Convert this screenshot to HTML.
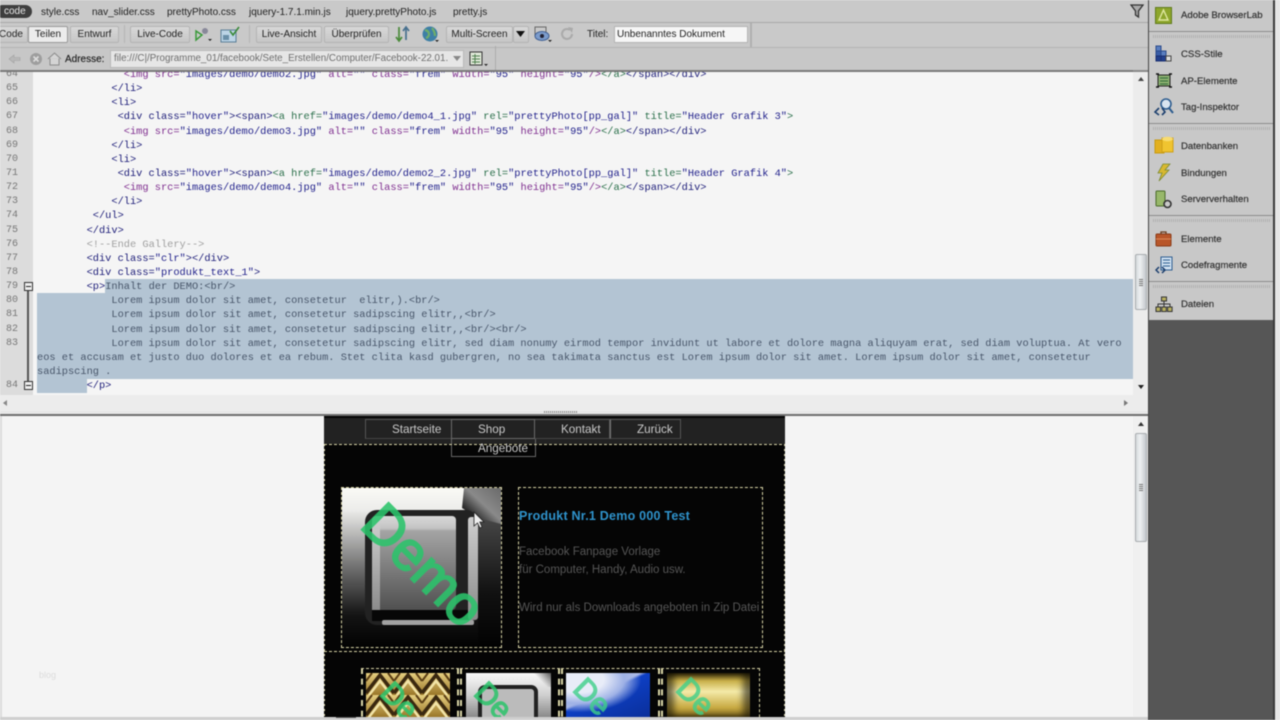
<!DOCTYPE html>
<html lang="de"><head><meta charset="utf-8"><title>Unbenanntes Dokument</title>
<style>
html,body{margin:0;padding:0;width:1280px;height:720px;overflow:hidden;background:#f4f4f4;font-family:"Liberation Sans",sans-serif}
#root{position:absolute;left:0;top:0;width:1280px;height:720px;overflow:hidden;filter:blur(.45px)}
.a{position:absolute;white-space:nowrap}
.bar{position:absolute;background:#c9c9c9}
.tab{position:absolute;top:6px;font-size:10px;line-height:13px;color:#222;white-space:nowrap}
.btn{position:absolute;top:26px;height:15px;line-height:15px;font-size:10px;color:#222;text-align:center;background:linear-gradient(#d8d8d8,#c6c6c6);border:1px solid #b4b4b4;border-radius:2px;white-space:nowrap}
.lbl{position:absolute;left:1181px;font-size:9.6px;line-height:12px;color:#333;-webkit-text-stroke:.2px #333;white-space:nowrap}
.pd{position:absolute;left:1149px;width:124px;height:1px;background:#8c8c8c}
.pg{position:absolute;left:1153px;width:118px;height:3px;background:repeating-linear-gradient(90deg,#b0b0b0 0 1px,#c9c9c9 1px 2px)}
#code{position:absolute;left:37px;margin:0;font:10.33px/14.14px "Liberation Mono",monospace;color:#1c1c78;white-space:pre}
#code i{font-style:normal;color:#803090}
#code b{font-weight:normal;color:#2a6f4a}
#code u{text-decoration:none;color:#23238c}
#code s{text-decoration:none;color:#a0a0a0}
#code em{font-style:normal;color:#48566a}
#nums{position:absolute;left:0;width:18px;text-align:right;font:10px/14.14px "Liberation Mono",monospace;color:#777;white-space:pre}
.sb{position:absolute;left:1135px;width:10px;background:linear-gradient(90deg,#d6dadd,#eef0f2 40%,#c4c8cc);border:1px solid #a9adb0;border-radius:2px}
.grip{position:absolute;left:3px;width:4px;height:7px;background:repeating-linear-gradient(#777 0 1px,transparent 1px 2px)}
.dash{position:absolute;border:1px dashed #d8d4a6;box-sizing:border-box}
.nv{position:absolute;top:419px;height:20px;border:1px solid #555;border-bottom-color:#444;box-sizing:border-box}
.nt{position:absolute;font-size:11.7px;line-height:14px;color:#c9c9c9;white-space:nowrap}
.ptxt{position:absolute;left:519px;font-size:11.5px;line-height:14px;color:#565656;white-space:nowrap}
.demo{position:absolute;font-family:"Liberation Sans",sans-serif;color:#2bc46b;white-space:nowrap;transform-origin:0 50%}
</style></head><body>
<div id="root">

<!-- code area -->
<div class="a" style="left:0;top:72px;width:1133px;height:323px;background:#f5f5f5"></div>
<div class="a" style="left:0;top:72px;width:33px;height:323px;background:#dcdcdc"></div>
<div class="a" style="left:105px;top:279px;width:1028px;height:14px;background:#b3c4d3"></div>
<div class="a" style="left:37px;top:293px;width:1096px;height:86px;background:#b3c4d3"></div>
<div class="a" style="left:37px;top:379px;width:50px;height:14px;background:#b3c4d3"></div>

<div class="a" style="left:0;top:72px;width:1133px;height:323px;overflow:hidden">
<div id="nums" style="top:-4px">64
65
66
67
68
69
70
71
72
73
74
75
76
77
78
79
80
81
82
83


84</div>
<pre id="code" style="top:-4px">              <i>&lt;img</i> <i>src=</i><u>"images/demo/demo2.jpg"</u> <i>alt=</i><u>""</u> <i>class=</i><u>"frem"</u> <i>width=</i><u>"95"</u> <i>height=</i><u>"95"</u><i>/&gt;</i><b>&lt;/a&gt;</b>&lt;/span&gt;&lt;/div&gt;
            &lt;/li&gt;
            &lt;li&gt;
             &lt;div class=<u>"hover"</u>&gt;&lt;span&gt;<b>&lt;a href=</b><u>"images/demo/demo4_1.jpg"</u> <b>rel=</b><u>"prettyPhoto[pp_gal]"</u> <b>title=</b><u>"Header Grafik 3"</u><b>&gt;</b>
              <i>&lt;img</i> <i>src=</i><u>"images/demo/demo3.jpg"</u> <i>alt=</i><u>""</u> <i>class=</i><u>"frem"</u> <i>width=</i><u>"95"</u> <i>height=</i><u>"95"</u><i>/&gt;</i><b>&lt;/a&gt;</b>&lt;/span&gt;&lt;/div&gt;
            &lt;/li&gt;
            &lt;li&gt;
             &lt;div class=<u>"hover"</u>&gt;&lt;span&gt;<b>&lt;a href=</b><u>"images/demo/demo2_2.jpg"</u> <b>rel=</b><u>"prettyPhoto[pp_gal]"</u> <b>title=</b><u>"Header Grafik 4"</u><b>&gt;</b>
              <i>&lt;img</i> <i>src=</i><u>"images/demo/demo4.jpg"</u> <i>alt=</i><u>""</u> <i>class=</i><u>"frem"</u> <i>width=</i><u>"95"</u> <i>height=</i><u>"95"</u><i>/&gt;</i><b>&lt;/a&gt;</b>&lt;/span&gt;&lt;/div&gt;
            &lt;/li&gt;
         &lt;/ul&gt;
        &lt;/div&gt;
        <s>&lt;!--Ende Gallery--&gt;</s>
        &lt;div class=<u>"clr"</u>&gt;&lt;/div&gt;
        &lt;div class=<u>"produkt_text_1"</u>&gt;
        &lt;p&gt;<em>Inhalt der DEMO:&lt;br/&gt;</em>
            <em>Lorem ipsum dolor sit amet, consetetur  elitr,).&lt;br/&gt;</em>
            <em>Lorem ipsum dolor sit amet, consetetur sadipscing elitr,,&lt;br/&gt;</em>
            <em>Lorem ipsum dolor sit amet, consetetur sadipscing elitr,,&lt;br/&gt;&lt;br/&gt;</em>
            <em>Lorem ipsum dolor sit amet, consetetur sadipscing elitr, sed diam nonumy eirmod tempor invidunt ut labore et dolore magna aliquyam erat, sed diam voluptua. At vero</em>
<em>eos et accusam et justo duo dolores et ea rebum. Stet clita kasd gubergren, no sea takimata sanctus est Lorem ipsum dolor sit amet. Lorem ipsum dolor sit amet, consetetur</em>
<em>sadipscing .</em>
        &lt;/p&gt;</pre>
</div>

<!-- fold markers -->
<div class="a" style="left:27px;top:286px;width:2px;height:99px;background:#555"></div>
<div class="a" style="left:24px;top:282px;width:7px;height:7px;border:1px solid #333;background:#eee"></div>
<div class="a" style="left:26px;top:286px;width:5px;height:1px;background:#222"></div>
<div class="a" style="left:24px;top:381px;width:7px;height:7px;border:1px solid #333;background:#eee"></div>
<div class="a" style="left:26px;top:385px;width:5px;height:1px;background:#222"></div>

<!-- code scrollbars -->
<div class="a" style="left:1133px;top:72px;width:15px;height:323px;background:#ececec"></div>
<svg class="a" style="left:1137px;top:76px" width="8" height="6"><path d="M4 1L7 5H1z" fill="#444"/></svg>
<svg class="a" style="left:1137px;top:384px" width="8" height="6"><path d="M4 5L7 1H1z" fill="#222"/></svg>
<div class="sb" style="top:254px;height:54px"><div class="grip" style="top:24px"></div></div>
<div class="a" style="left:0;top:395px;width:1148px;height:16px;background:#ececec"></div>
<svg class="a" style="left:2px;top:399px" width="6" height="8"><path d="M1 4L5 1V7z" fill="#888"/></svg>
<svg class="a" style="left:1123px;top:399px" width="6" height="8"><path d="M5 4L1 1V7z" fill="#777"/></svg>
<div class="a" style="left:0;top:411px;width:1148px;height:5px;background:#e8e8e8"></div>
<div class="a" style="left:544px;top:411px;width:34px;height:2px;background:repeating-linear-gradient(90deg,#888 0 1px,#e8e8e8 1px 2px)"></div>
<div class="a" style="left:0;top:414px;width:1148px;height:2px;background:#6e6e6e"></div>

<!-- design view -->
<div class="a" style="left:0;top:416px;width:1133px;height:301px;background:#f4f4f4"></div>
<div class="a" style="left:0;top:416px;width:2px;height:301px;background:#dcdcdc"></div>
<div class="a" style="left:39px;top:669px;font-size:9px;line-height:12px;color:#dcdcdc">blog</div>
<div class="a" style="left:1133px;top:416px;width:15px;height:301px;background:#f0f0f0"></div>
<svg class="a" style="left:1137px;top:421px" width="8" height="6"><path d="M4 1L7 5H1z" fill="#333"/></svg>
<div class="sb" style="top:433px;height:107px"><div class="grip" style="top:50px"></div></div>

<div class="a" style="left:324px;top:416px;width:461px;height:301px;background:#050505"></div>
<div class="a" style="left:324px;top:418px;width:461px;height:26px;background:#222"></div>
<div class="nv" style="left:365px;width:86px;border-right:0"></div>
<div class="nv" style="left:451px;width:84px;border-color:#6a6a6a"></div>
<div class="nv" style="left:535px;width:75px;border-left:0"></div>
<div class="nv" style="left:610px;width:71px;border-left-color:#777"></div>
<div class="nv" style="left:451px;top:439px;width:85px;height:18px;border-top:0;border-color:#666"></div>
<div class="a" style="left:324px;top:444px;width:461px;height:1px;background:repeating-linear-gradient(90deg,#d8d4a6 0 3px,transparent 3px 5px)"></div>
<div class="a" style="left:324px;top:651px;width:461px;height:1px;background:repeating-linear-gradient(90deg,#d8d4a6 0 3px,transparent 3px 5px)"></div>
<div class="a" style="left:324px;top:444px;width:1px;height:273px;background:repeating-linear-gradient(#d8d4a6 0 2px,transparent 2px 5px)"></div>
<div class="a" style="left:784px;top:444px;width:1px;height:273px;background:repeating-linear-gradient(#d8d4a6 0 2px,transparent 2px 5px)"></div>
<div class="nt" style="left:392px;top:423px">Startseite</div>
<div class="nt" style="left:478px;top:423px">Shop</div>
<div class="nt" style="left:478px;top:442px">Angebote</div>
<div class="nt" style="left:561px;top:423px">Kontakt</div>
<div class="nt" style="left:637px;top:423px">Zurück</div>

<!-- main product image -->
<div class="dash" style="left:341px;top:487px;width:161px;height:161px"></div>
<svg class="a" style="left:342px;top:488px" width="159" height="159" viewBox="0 0 159 159">
<defs>
<linearGradient id="bg" x1="0" y1="0" x2="0" y2="1"><stop offset="0" stop-color="#fafaf6"/><stop offset=".14" stop-color="#ececea"/><stop offset=".5" stop-color="#707070"/><stop offset=".8" stop-color="#141414"/><stop offset="1" stop-color="#020202"/></linearGradient>
<linearGradient id="rt" x1="0" y1="0" x2="0" y2="1"><stop offset="0" stop-color="#4a4a4a"/><stop offset=".6" stop-color="#111"/><stop offset="1" stop-color="#020202"/></linearGradient>
<linearGradient id="inn" x1="0" y1="0" x2="0" y2="1"><stop offset="0" stop-color="#d8d8d8"/><stop offset=".13" stop-color="#c4c4c4"/><stop offset=".16" stop-color="#a4a4a4"/><stop offset="1" stop-color="#505050"/></linearGradient>
<linearGradient id="cor" x1="0" y1="1" x2="1" y2="0"><stop offset=".25" stop-color="#2a2a2a"/><stop offset=".55" stop-color="#8a8a8a"/><stop offset="1" stop-color="#6a6a6a"/></linearGradient>
<linearGradient id="sd" x1="0" y1="0" x2="0" y2="1"><stop offset="0" stop-color="#cfcfcf"/><stop offset="1" stop-color="#8a8a8a"/></linearGradient>
</defs>
<rect width="159" height="159" fill="url(#bg)"/>
<rect x="136" y="25" width="23" height="134" fill="url(#rt)"/>
<path d="M122 0H159V36L136 30 120 20z" fill="url(#cor)"/>
<rect x="23" y="22" width="113" height="115" rx="12" fill="#222"/>
<rect x="30" y="28" width="84" height="94" rx="4" fill="url(#inn)"/>
<rect x="30" y="32" width="8" height="92" rx="2" fill="url(#sd)"/>
<rect x="126" y="29" width="10" height="103" rx="3" fill="url(#sd)"/>
<rect x="30" y="122" width="96" height="11" fill="#070707"/>
<rect x="40" y="132" width="92" height="5" rx="2" fill="#a2a2a2"/>
</svg>
<div class="demo" style="left:372px;top:493px;font-size:55px;line-height:40px;transform:rotate(45deg);height:40px;opacity:.88;-webkit-text-stroke:2px #2bc46b">Demo</div>
<svg class="a" style="left:473px;top:511px" width="13" height="18"><path d="M1 1V15L4.5 12 7 17 9 16 6.8 11H11z" fill="#eee" stroke="#222" stroke-width=".8"/></svg>

<!-- text box -->
<div class="dash" style="left:518px;top:487px;width:245px;height:161px"></div>
<div class="ptxt" style="top:509px;font-weight:bold;font-size:12.5px;letter-spacing:.23px;color:#2f93cc">Produkt Nr.1 Demo 000 Test</div>
<div class="ptxt" style="top:545px">Facebook Fanpage Vorlage</div>
<div class="ptxt" style="top:563px">für Computer, Handy, Audio usw.</div>
<div class="ptxt" style="top:601px">Wird nur als Downloads angeboten in Zip Datei</div>

<!-- thumbnails -->
<div class="a" style="left:324px;top:416px;width:461px;height:301px;overflow:hidden">
  <div class="dash" style="left:37px;top:252px;width:98px;height:70px;border-bottom:0;border-width:1px 2px 0 2px"></div>
  <div class="dash" style="left:136px;top:252px;width:100px;height:70px;border-width:1px 2px 0 2px"></div>
  <div class="dash" style="left:237px;top:252px;width:99px;height:70px;border-width:1px 2px 0 2px"></div>
  <div class="dash" style="left:337px;top:252px;width:99px;height:70px;border-width:1px 1px 0 2px"></div>
  <svg class="a" style="left:42px;top:257px" width="84" height="44" viewBox="0 0 84 44">
    <defs>
      <linearGradient id="gd" x1="0" y1="0" x2="0" y2="1"><stop offset="0" stop-color="#e6cf80"/><stop offset="1" stop-color="#9a7628"/></linearGradient>
      <pattern id="chev" width="28" height="22" patternUnits="userSpaceOnUse">
        <rect width="28" height="22" fill="url(#gd)"/>
        <path d="M0 20L14 2 28 20" fill="none" stroke="#3a2810" stroke-width="3.5"/>
        <path d="M0 26L14 8 28 26" fill="none" stroke="#f2e4a8" stroke-width="2.5"/>
        <path d="M0 8L6 0M28 8L22 0" stroke="#5a3d14" stroke-width="2"/>
      </pattern>
    </defs>
    <rect width="84" height="44" fill="url(#chev)"/>
  </svg>
  <div class="a" style="left:142px;top:257px;width:85px;height:44px;background:linear-gradient(#fafafa,#cfcfcf 50%,#8a8a8a)"></div>
  <div class="a" style="left:205px;top:257px;width:22px;height:14px;background:linear-gradient(45deg,transparent 50%,#555)"></div>
  <div class="a" style="left:154px;top:269px;width:60px;height:32px;background:#bbb;border:4px solid #222;border-bottom:0;border-radius:7px 7px 0 0;box-sizing:border-box"></div>
  <div class="a" style="left:242px;top:257px;width:84px;height:44px;background:radial-gradient(ellipse at 15% 15%,#e8ecf8 0 25%,#9fb2e6 45%,transparent 62%),linear-gradient(155deg,#b0bde8 0 42%,#0e3fc4 46%,#0a2f9a)"></div>
  <div class="a" style="left:343px;top:257px;width:83px;height:44px;background:linear-gradient(#4a3c0e,#c9b04a 18%,#f4eaa8 42%,#c9ab44 78%,#8a7020);box-shadow:inset 7px 0 7px rgba(0,0,0,.55),inset -7px 0 7px rgba(0,0,0,.55)"></div>
  <div class="demo" style="left:61px;top:262px;font-size:30px;line-height:20px;height:20px;transform:rotate(45deg);opacity:.85;-webkit-text-stroke:1.4px #2bc46b">De</div>
  <div class="demo" style="left:155px;top:262px;font-size:30px;line-height:20px;height:20px;transform:rotate(45deg);opacity:.85;-webkit-text-stroke:1.4px #2bc46b">De</div>
  <div class="demo" style="left:254px;top:258px;font-size:30px;line-height:20px;height:20px;transform:rotate(45deg);opacity:.8;color:#3fd08a;-webkit-text-stroke:1.4px #3fd08a">De</div>
  <div class="demo" style="left:357px;top:258px;font-size:30px;line-height:20px;height:20px;transform:rotate(45deg);opacity:.8;color:#3fd08a;-webkit-text-stroke:1.4px #3fd08a">De</div>
</div>
<div class="a" style="left:0;top:717px;width:1148px;height:3px;background:#cfcfcf"></div>
<div class="a" style="left:336px;top:717px;width:20px;height:1px;background:#555"></div>

<!-- top bars -->
<div class="bar" style="left:0;top:0;width:1148px;height:22px"></div>
<div class="a" style="left:0;top:22px;width:1148px;height:1px;background:#a8a8a8"></div>
<div class="bar" style="left:0;top:23px;width:1148px;height:24px"></div>
<div class="a" style="left:750px;top:23px;width:2px;height:24px;background:#b0b0b0"></div>
<div class="a" style="left:0;top:47px;width:1148px;height:1px;background:#b4b4b4"></div>
<div class="bar" style="left:0;top:48px;width:1148px;height:23px;background:#c7c7c7"></div>
<div class="a" style="left:495px;top:46px;width:1px;height:25px;background:#ababab"></div>
<div class="a" style="left:0;top:70px;width:1133px;height:2px;background:#7a7a7a"></div>
<div class="a" style="left:1133px;top:70px;width:15px;height:2px;background:#8a8a8a"></div>

<div class="a" style="left:-4px;top:5px;width:36px;height:13px;background:#3e3e3e;border-radius:7px"></div>
<div class="tab" style="left:4px;top:5px;color:#e8e8e8">code</div>
<div class="tab" style="left:41px">style.css</div>
<div class="tab" style="left:92px">nav_slider.css</div>
<div class="tab" style="left:167px">prettyPhoto.css</div>
<div class="tab" style="left:249px">jquery-1.7.1.min.js</div>
<div class="tab" style="left:346px">jquery.prettyPhoto.js</div>
<div class="tab" style="left:453px">pretty.js</div>
<svg class="a" style="left:1130px;top:4px" width="14" height="15"><path d="M1 1H13L8.5 7V13L5.5 11V7z" fill="#aaa" stroke="#333" stroke-width="1.3"/></svg>

<div class="btn" style="left:-6px;width:32px">Code</div>
<div class="btn" style="left:28px;width:38px;background:#ececec;border-color:#999">Teilen</div>
<div class="btn" style="left:70px;width:47px">Entwurf</div>
<div class="a" style="left:124px;top:25px;width:1px;height:18px;background:#b4b4b4"></div>
<div class="btn" style="left:130px;width:58px">Live-Code</div>
<svg class="a" style="left:194px;top:25px" width="20" height="18"><path d="M2 6L8 10 2 15z" fill="none" stroke="#3a9a3a" stroke-width="1.5"/><circle cx="11" cy="6" r="3" fill="#889"/><path d="M14 14h4l-2 2z" fill="#222"/></svg>
<svg class="a" style="left:220px;top:25px" width="22" height="18"><rect x="1" y="5" width="15" height="12" fill="#bcd4e6" stroke="#5a7d96"/><rect x="3" y="10" width="6" height="5" fill="#6a8fa8"/><path d="M10 6l3 4 6-8" fill="none" stroke="#3a8a3a" stroke-width="1.6"/></svg>
<div class="a" style="left:249px;top:25px;width:1px;height:18px;background:#b4b4b4"></div>
<div class="btn" style="left:256px;width:64px">Live-Ansicht</div>
<div class="btn" style="left:324px;width:63px">Überprüfen</div>
<svg class="a" style="left:394px;top:25px" width="20" height="18"><path d="M5 2V15M2 12l3 4 3-4" fill="none" stroke="#4a8a3a" stroke-width="1.7"/><path d="M12 15V3M9 6l3-4 3 4" fill="none" stroke="#47708e" stroke-width="1.7"/></svg>
<svg class="a" style="left:420px;top:25px" width="20" height="18"><circle cx="10" cy="9" r="7.5" fill="#3e7fa6"/><path d="M5 5q4 1 4 4t-3 4M12 3q3 4 3 8" fill="none" stroke="#6fae6a" stroke-width="2.2"/><path d="M15 15h4l-2 2z" fill="#222"/></svg>
<div class="btn" style="left:446px;width:65px">Multi-Screen</div>
<div class="btn" style="left:513px;width:14px"></div>
<svg class="a" style="left:516px;top:31px" width="9" height="6"><path d="M0 0H9L4.5 6z" fill="#111"/></svg>
<svg class="a" style="left:533px;top:25px" width="20" height="18"><rect x="2" y="2" width="11" height="9" fill="none" stroke="#666"/><ellipse cx="9" cy="11" rx="7" ry="4.5" fill="#7c9ccc" stroke="#3f5f92"/><circle cx="9" cy="11" r="2" fill="#223"/><path d="M15 15h4l-2 2z" fill="#222"/></svg>
<svg class="a" style="left:560px;top:26px" width="15" height="16"><path d="M12 8a5 5 0 1 1-2-4" fill="none" stroke="#aaa" stroke-width="2"/><path d="M8 1l5 1-1 5z" fill="#aaa"/></svg>
<div class="a" style="left:587px;top:28px;font-size:10px;line-height:13px;color:#222">Titel:</div>
<div class="a" style="left:614px;top:26px;width:130px;height:15px;line-height:15px;background:#f6f6f6;border:1px solid #b4b4b4;font-size:10px;color:#222;padding-left:2px">Unbenanntes Dokument</div>

<svg class="a" style="left:8px;top:52px" width="14" height="14"><path d="M1 7L6 3V5.5H12V8.5H6V11z" fill="#b8b8b8" stroke="#a2a2a2" stroke-width=".6"/></svg>
<svg class="a" style="left:29px;top:52px" width="14" height="14"><circle cx="7" cy="7" r="6" fill="#9e9e9e"/><path d="M4.5 4.5l5 5M9.5 4.5l-5 5" stroke="#ddd" stroke-width="1.6"/></svg>
<svg class="a" style="left:47px;top:52px" width="15" height="14"><path d="M1 7L7.5 1 14 7M3 6.5V13H12V6.5" fill="#d4d4d4" stroke="#8a8a8a"/></svg>
<div class="a" style="left:65px;top:53px;font-size:10px;line-height:13px;color:#222;-webkit-text-stroke:.15px #222">Adresse:</div>
<div class="a" style="left:110px;top:50px;width:352px;height:16px;line-height:16px;background:#e6e6e6;border:1px solid #b8b8b8;font-size:9.8px;color:#6e6e6e;overflow:hidden;text-indent:3px">file:///C|/Programme_01/facebook/Sete_Erstellen/Computer/Facebook-22.01.</div>
<svg class="a" style="left:453px;top:56px" width="8" height="5"><path d="M0 0H8L4 5z" fill="#888"/></svg>
<svg class="a" style="left:469px;top:51px" width="20" height="17"><rect x="1" y="1" width="12" height="13" fill="#dfe8d8" stroke="#333"/><path d="M3 5H11M3 8H11M3 11H11M6 3V13" stroke="#4f7f4f"/><path d="M15 13h4l-2 2z" fill="#222"/></svg>

<!-- right panel -->
<div class="a" style="left:1148px;top:0;width:1px;height:720px;background:#444"></div>
<div class="bar" style="left:1149px;top:0;width:124px;height:320px;background:#c8c8c8"></div>
<div class="a" style="left:1149px;top:320px;width:124px;height:400px;background:#565656"></div>
<div class="a" style="left:1273px;top:0;width:2px;height:720px;background:#3a3a3a"></div>
<div class="a" style="left:1275px;top:0;width:5px;height:720px;background:#e6e6e6"></div>
<div class="pd" style="top:31px"></div><div class="pg" style="top:35px"></div>
<div class="pd" style="top:123px"></div><div class="pg" style="top:127px"></div>
<div class="pd" style="top:215px"></div><div class="pg" style="top:219px"></div>
<div class="pd" style="top:281px"></div><div class="pg" style="top:285px"></div>
<div class="lbl" style="top:10px">Adobe BrowserLab</div>
<div class="lbl" style="top:49px">CSS-Stile</div>
<div class="lbl" style="top:76px">AP-Elemente</div>
<div class="lbl" style="top:102px">Tag-Inspektor</div>
<div class="lbl" style="top:141px">Datenbanken</div>
<div class="lbl" style="top:168px">Bindungen</div>
<div class="lbl" style="top:194px">Serververhalten</div>
<div class="lbl" style="top:234px">Elemente</div>
<div class="lbl" style="top:260px">Codefragmente</div>
<div class="lbl" style="top:299px">Dateien</div>

<svg class="a" style="left:1155px;top:7px" width="18" height="17"><rect x=".5" y=".5" width="16" height="16" fill="#8da62c" stroke="#5f7a1a"/><path d="M8.5 3L13 13H4z" fill="none" stroke="#dfe8a0" stroke-width="1.4"/></svg>
<svg class="a" style="left:1155px;top:45px" width="18" height="17"><rect x="1" y="1" width="5" height="5" fill="#5a7ec0" stroke="#2a4a8a"/><rect x="1" y="6" width="5" height="5" fill="#3a5ea8" stroke="#2a4a8a"/><rect x="6" y="6" width="5" height="5" fill="#5a7ec0" stroke="#2a4a8a"/><rect x="1" y="11" width="5" height="5" fill="#23408e" stroke="#1a2f70"/><rect x="6" y="11" width="5" height="5" fill="#23408e" stroke="#1a2f70"/><rect x="11" y="11" width="5" height="5" fill="#ddd" stroke="#444"/></svg>
<svg class="a" style="left:1155px;top:72px" width="18" height="17"><rect x="3" y="3" width="12" height="11" fill="#8cb070" stroke="#222"/><path d="M5 6H13M5 9H13M5 12H13" stroke="#2f6a3a"/><path d="M1 2H4M14 2H17M1 15H4M14 15H17" stroke="#111" stroke-width="1.5"/></svg>
<svg class="a" style="left:1154px;top:97px" width="20" height="20"><circle cx="12" cy="7" r="5" fill="#d8e4f0" stroke="#2d5c8f" stroke-width="1.6"/><path d="M15 11l4 5" stroke="#2d5c8f" stroke-width="2"/><path d="M5 11L1 15 5 18M8 11L11 15 8 18" fill="none" stroke="#1c3f6e" stroke-width="1.6"/></svg>
<svg class="a" style="left:1154px;top:135px" width="20" height="20"><path d="M1 5H10V18H1z" fill="#e2b020" stroke="#c89a10"/><path d="M8 3H19V17H8z" fill="#f0c430" stroke="#cfa018"/><ellipse cx="13.5" cy="4" rx="5.5" ry="2.2" fill="#f8dc70"/></svg>
<svg class="a" style="left:1155px;top:163px" width="18" height="19"><path d="M8 1H15L10 7H14L4 18 7 10H3z" fill="#d8b830" stroke="#7a8a30" stroke-width=".8"/></svg>
<svg class="a" style="left:1155px;top:190px" width="18" height="20"><rect x="1" y="1" width="9" height="15" rx="1" fill="#98b86a" stroke="#4a6a2a"/><circle cx="12.5" cy="14" r="3.5" fill="#c8c8c8" stroke="#333" stroke-width="1.6"/></svg>
<svg class="a" style="left:1155px;top:230px" width="18" height="17"><rect x="1" y="4" width="15" height="12" rx="1" fill="#b8562a" stroke="#8a3a18"/><path d="M6 4V2H11V4" fill="none" stroke="#6a3a1a" stroke-width="1.3"/><path d="M1 9H16" stroke="#dc8a5a"/></svg>
<svg class="a" style="left:1155px;top:256px" width="19" height="18"><rect x="6" y="1" width="11" height="13" fill="#cfe0f0" stroke="#2d5c8f"/><path d="M8 4H15M8 7H15M8 10H15" stroke="#2d5c8f"/><path d="M4 11L1 14 4 17M7 11L10 14 7 17" fill="none" stroke="#1c3f6e" stroke-width="1.5"/></svg>
<svg class="a" style="left:1155px;top:296px" width="18" height="17"><rect x="6.5" y="1" width="5" height="4" fill="#b8b060" stroke="#333"/><path d="M9 5V8M3 11V8H15V11M9 8V11" fill="none" stroke="#333"/><rect x="1" y="11" width="4.5" height="4.5" fill="#b8b060" stroke="#333"/><rect x="6.8" y="11" width="4.5" height="4.5" fill="#b8b060" stroke="#333"/><rect x="12.6" y="11" width="4.5" height="4.5" fill="#b8b060" stroke="#333"/></svg>

</div>
</body></html>
